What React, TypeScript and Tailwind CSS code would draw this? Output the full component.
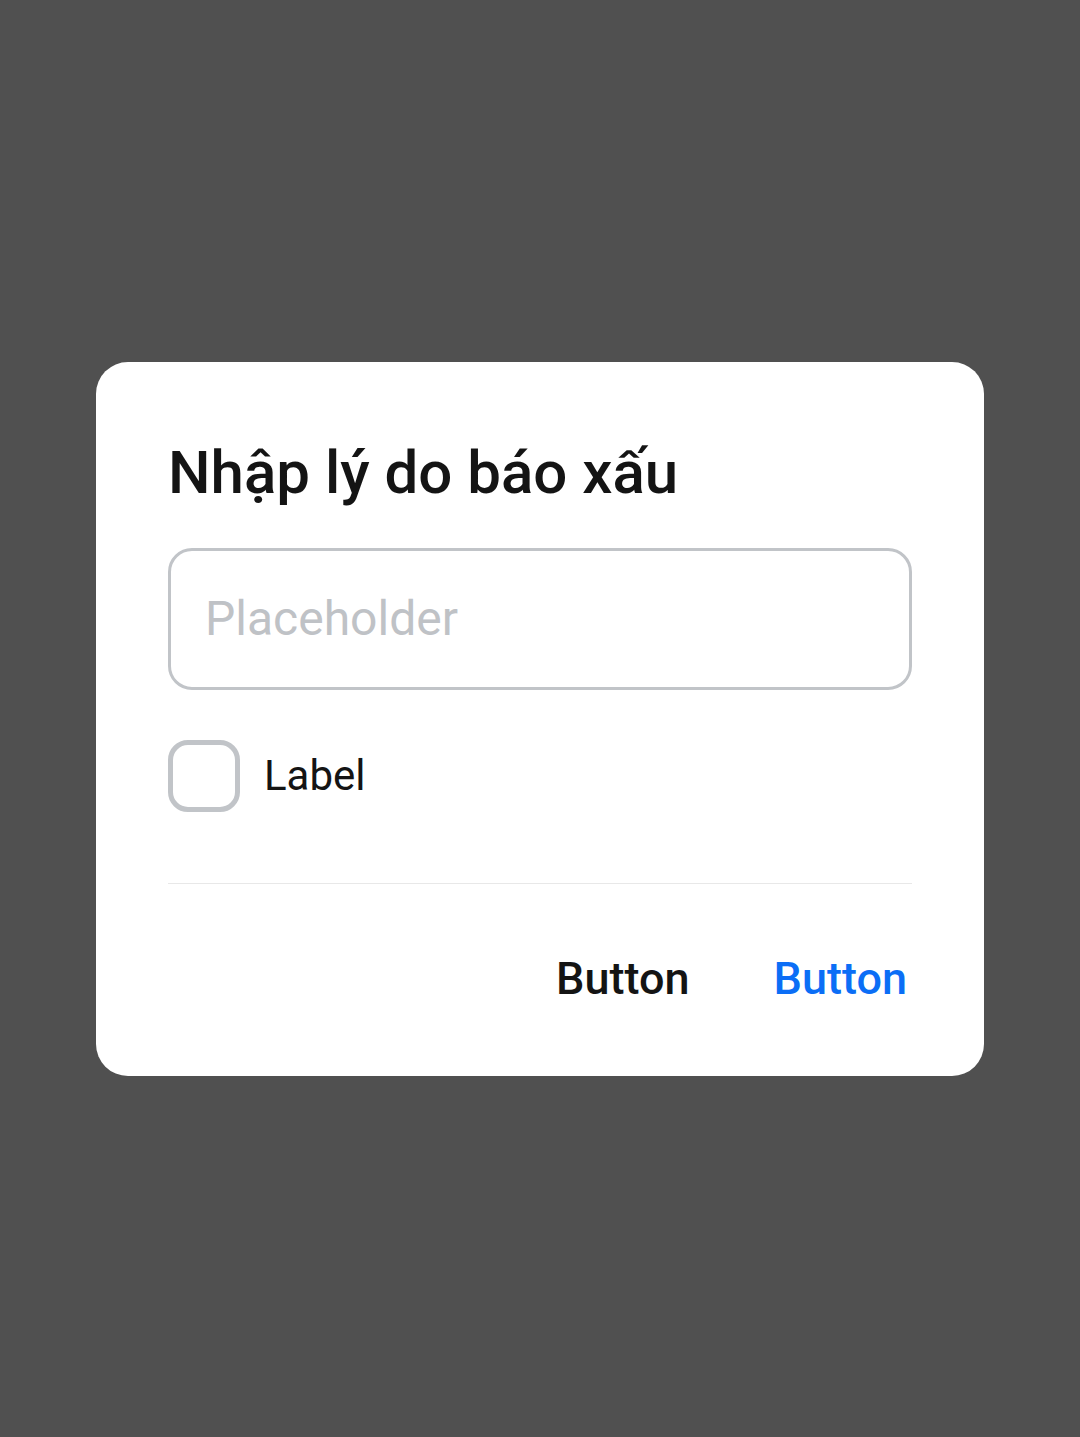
export default function App() {
  return (
    <div className="min-h-[1437px] w-full bg-[#505050] flex items-center justify-center font-['Roboto',sans-serif]">
      <div className="w-[888px] bg-white rounded-[32px] px-[72px] pt-[75px] pb-[53px]">
        <h1 className="text-[60px] leading-[72px] font-medium text-[#141414]">Nhập lý do báo xấu</h1>
        <div className="mt-[39px] h-[142px] rounded-[24px] border-[3px] border-[#c1c4c8] flex items-center px-[34px]">
          <input
            type="text"
            placeholder="Placeholder"
            className="w-full bg-transparent text-[48px] text-[#141414] placeholder:text-[#bfc2c6] focus:outline-none"
          />
        </div>
        <label className="mt-[50px] flex items-center gap-[24px]">
          <span className="w-[72px] h-[72px] rounded-[20px] border-[5px] border-[#c1c4c8]" />
          <span className="text-[42px] text-[#141414]">Label</span>
        </label>
        <div className="mt-[71px] h-[1px] bg-[#e8e8e8]" />
        <div className="flex justify-end items-center gap-[84px] h-[88px] mt-[51px] pr-[5px]">
          <button className="text-[45px] font-medium text-[#141414]">Button</button>
          <button className="text-[45px] font-medium text-[#0b6ef6]">Button</button>
        </div>
      </div>
    </div>
  );
}
